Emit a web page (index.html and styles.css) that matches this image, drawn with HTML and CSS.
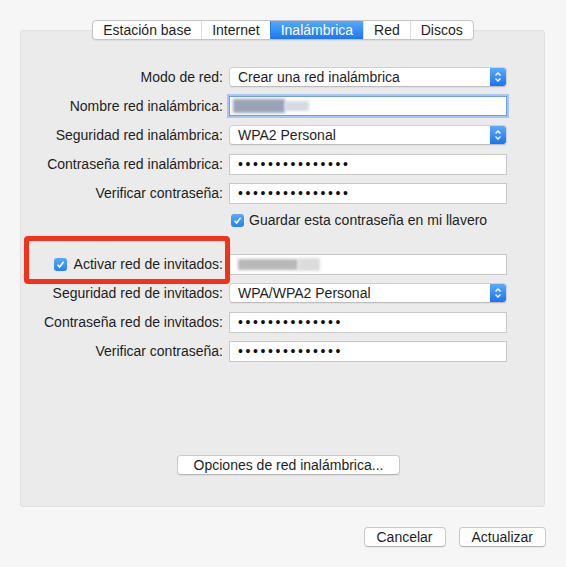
FILE: index.html
```html
<!DOCTYPE html>
<html lang="es">
<head>
    <meta charset="UTF-8">
    <meta name="viewport" content="width=device-width, initial-scale=1.0">
    <title>Inalámbrica</title>
    <link rel="stylesheet" href="styles.css">
</head>
<body>
    <div class="window">
        <div class="tabs">
            <span class="tab">Estación base</span>
            <span class="tab">Internet</span>
            <span class="tab active">Inalámbrica</span>
            <span class="tab">Red</span>
            <span class="tab">Discos</span>
        </div>

        <div class="panel">
            <div class="form-grid">
                <label class="label">Modo de red:</label>
                <div class="select">
                    <span class="select-text">Crear una red inalámbrica</span>
                    <span class="stepper">
                        <svg width="8" height="12" viewBox="0 0 8 12"><path d="M1.5 4.5 L4 2 L6.5 4.5 M1.5 7.5 L4 10 L6.5 7.5" fill="none" stroke="#fff" stroke-width="1.4"/></svg>
                    </span>
                </div>

                <label class="label">Nombre red inalámbrica:</label>
                <div class="field focused">
                    <span class="blur blur-dark"></span><span class="blur blur-light"></span>
                </div>

                <label class="label">Seguridad red inalámbrica:</label>
                <div class="select">
                    <span class="select-text">WPA2 Personal</span>
                    <span class="stepper">
                        <svg width="8" height="12" viewBox="0 0 8 12"><path d="M1.5 4.5 L4 2 L6.5 4.5 M1.5 7.5 L4 10 L6.5 7.5" fill="none" stroke="#fff" stroke-width="1.4"/></svg>
                    </span>
                </div>

                <label class="label">Contraseña red inalámbrica:</label>
                <div class="field"><span class="dots">•••••••••••••••</span></div>

                <label class="label">Verificar contraseña:</label>
                <div class="field"><span class="dots">•••••••••••••••</span></div>

                <span></span>
                <label class="check-row">
                    <span class="checkbox">
                        <svg width="9" height="9" viewBox="0 0 9 9"><path d="M1.5 4.8 L3.6 7 L7.6 1.8" fill="none" stroke="#fff" stroke-width="1.6"/></svg>
                    </span>
                    Guardar esta contraseña en mi llavero
                </label>

                <span></span><span></span>

                <label class="label guest">
                    <span class="checkbox">
                        <svg width="9" height="9" viewBox="0 0 9 9"><path d="M1.5 4.8 L3.6 7 L7.6 1.8" fill="none" stroke="#fff" stroke-width="1.6"/></svg>
                    </span>
                    Activar red de invitados:
                </label>
                <div class="field">
                    <span class="blur blur-guest"></span><span class="blur blur-guest-light"></span>
                </div>

                <label class="label">Seguridad red de invitados:</label>
                <div class="select">
                    <span class="select-text">WPA/WPA2 Personal</span>
                    <span class="stepper">
                        <svg width="8" height="12" viewBox="0 0 8 12"><path d="M1.5 4.5 L4 2 L6.5 4.5 M1.5 7.5 L4 10 L6.5 7.5" fill="none" stroke="#fff" stroke-width="1.4"/></svg>
                    </span>
                </div>

                <label class="label">Contraseña red de invitados:</label>
                <div class="field"><span class="dots">••••••••••••••</span></div>

                <label class="label">Verificar contraseña:</label>
                <div class="field"><span class="dots">••••••••••••••</span></div>
            </div>

            <div class="panel-foot">
                <button class="btn btn-wide">Opciones de red inalámbrica...</button>
            </div>
        </div>

        <div class="actions">
            <button class="btn">Cancelar</button>
            <button class="btn">Actualizar</button>
        </div>
    </div>
</body>
</html>
```

FILE: styles.css
```css
body {
    margin: 0;
    background: #f6f6f6;
    font-family: 'Liberation Sans', Arial, sans-serif;
    font-size: 14px;
    color: #1e1e1e;
}

.window {
    width: 566px;
    height: 567px;
    padding-top: 20px;
    box-sizing: border-box;
}

/* segmented tabs */
.tabs {
    display: flex;
    width: max-content;
    height: 20px;
    margin: 0 auto -10px;
    position: relative;
    z-index: 1;
    background: #fff;
    border: 1px solid #c4c4c4;
    border-radius: 4px;
    box-shadow: 0 1px 1px rgba(0, 0, 0, 0.06);
    overflow: hidden;
    box-sizing: border-box;
}

.tab {
    padding: 0 10px;
    line-height: 18px;
    border-left: 1px solid #dedede;
}

.tab:first-child {
    border-left: none;
}

.tab.active {
    background: linear-gradient(#55a9fc, #1b77f2);
    color: #fff;
    border-left-color: #2b7fe6;
}

.panel {
    display: flex;
    flex-direction: column;
    height: 477px;
    margin: 0 21px 0 20px;
    padding-top: 35px;
    box-sizing: border-box;
    background: #ebebeb;
    border: 1px solid #e1e1e1;
    border-radius: 3px;
}

.form-grid {
    display: grid;
    grid-template-columns: 202px 278px;
    grid-template-rows: repeat(5, 22px) 18px 10px repeat(4, 22px);
    column-gap: 6px;
    row-gap: 7px;
    align-items: center;
}

.label {
    text-align: right;
    white-space: nowrap;
}

.label.guest {
    position: relative;
    display: flex;
    justify-content: flex-end;
    align-items: center;
    gap: 7px;
}

/* red highlight around the guest toggle */
.label.guest::after {
    content: "";
    position: absolute;
    left: 3px;
    top: -20px;
    width: 206px;
    height: 48px;
    border: 5px solid #f2331c;
    border-radius: 4px;
    box-sizing: border-box;
}

.field {
    display: flex;
    align-items: center;
    height: 21px;
    padding: 0 8px;
    background: #fff;
    border: 1px solid #c9c9c9;
    box-sizing: border-box;
}

.field.focused {
    height: 20px;
    padding: 0 3px;
    border-color: #6f9fe0;
    box-shadow: 0 0 0 2px #a9c6ef;
}

.dots {
    font-size: 14px;
    letter-spacing: 2.6px;
    color: #111;
    line-height: 1;
}

.blur {
    display: inline-block;
    height: 14px;
    filter: blur(1.5px);
}

.blur-dark {
    width: 52px;
    background: #9aa4b6;
}

.blur-light {
    width: 24px;
    height: 10px;
    background: #d6dae2;
}

.blur-guest {
    width: 60px;
    height: 11px;
    background: #b8b8b8;
}

.blur-guest-light {
    width: 22px;
    height: 13px;
    background: #dcdcdc;
}

.select {
    display: flex;
    align-items: center;
    height: 20px;
    background: #fff;
    border: 1px solid #cfcfcf;
    border-bottom-color: #bdbdbd;
    border-radius: 4px;
    box-sizing: border-box;
    box-shadow: 0 1px 1px rgba(0, 0, 0, 0.05);
    overflow: hidden;
}

.select-text {
    flex: 1;
    padding-left: 8px;
}

.stepper {
    display: flex;
    align-items: center;
    justify-content: center;
    width: 16px;
    height: 100%;
    background: linear-gradient(#5aaafc, #1a74f1);
}

.check-row {
    display: flex;
    align-items: center;
    gap: 5px;
    padding-left: 2px;
}

.checkbox {
    display: inline-flex;
    align-items: center;
    justify-content: center;
    width: 13px;
    height: 13px;
    border-radius: 3px;
    background: linear-gradient(#5aa9fb, #2580f2);
    box-sizing: border-box;
}

.panel-foot {
    margin-top: auto;
    padding: 0 0 31px 12px;
    display: flex;
    justify-content: center;
}

.btn {
    height: 20px;
    padding: 0 12px;
    min-width: 82px;
    font-family: inherit;
    font-size: 14px;
    line-height: 1;
    color: #1e1e1e;
    background: #fff;
    border: 1px solid #cacaca;
    border-bottom-color: #b5b5b5;
    border-radius: 4px;
    box-shadow: 0 1px 1px rgba(0, 0, 0, 0.05);
}

.btn-wide {
    padding: 0 16px;
}

.actions {
    display: flex;
    justify-content: flex-end;
    gap: 13px;
    margin-top: 20px;
    padding-right: 20px;
}
```
